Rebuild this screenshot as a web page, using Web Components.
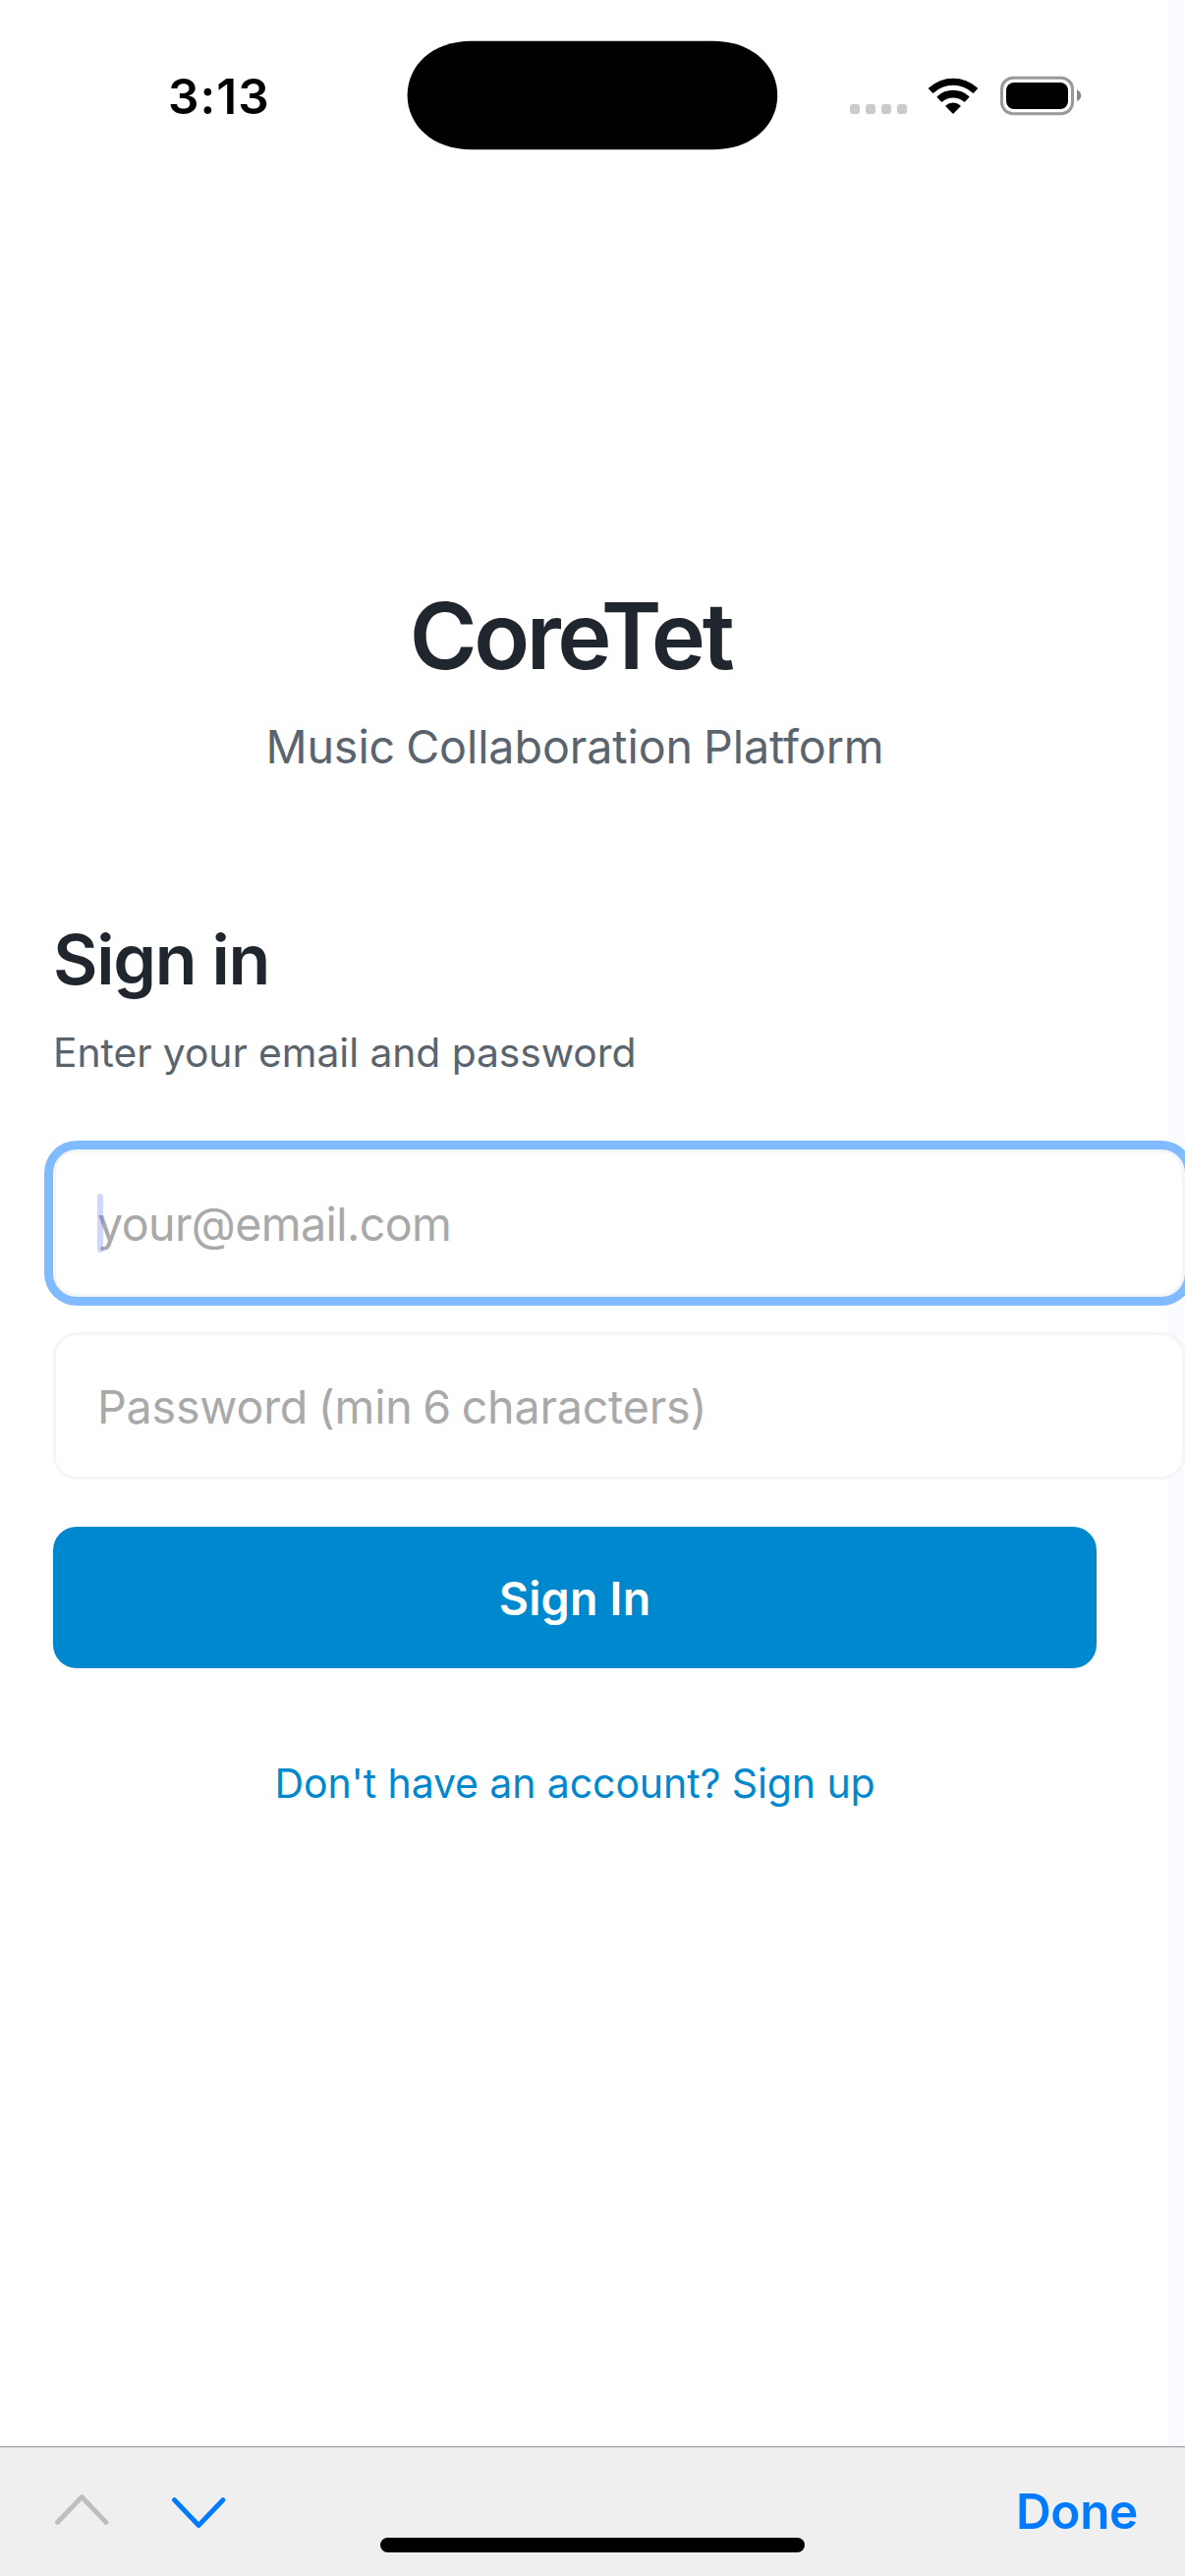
<!DOCTYPE html>
<html lang="en">
<head>
<meta charset="utf-8">
<title>CoreTet</title>
<style>
  html, body { margin: 0; padding: 0; }
  body { width: 1206px; height: 2622px; overflow: hidden; background: #fafbfe; font-family: Inter, "Liberation Sans", sans-serif; }
</style>
</head>
<body>
<phone-screen>
  <status-bar slot="status" time="3:13"></status-bar>
  <brand-header>CoreTet<span slot="tagline">Music Collaboration Platform</span></brand-header>
  <sign-in-form>
    <text-field focused style="--tracking:-0.61px">your@email.com</text-field>
    <text-field style="--tracking:-0.2px;--word-gap:-2.2px">Password (min 6 characters)</text-field>
    <primary-button>Sign In</primary-button>
    <link-button>Don't have an account? Sign up</link-button>
  </sign-in-form>
  <input-accessory slot="accessory">Done</input-accessory>
</phone-screen>

<script>
const define = (name, html) => {
  const template = document.createElement('template');
  template.innerHTML = html;
  customElements.define(name, class extends HTMLElement {
    connectedCallback() {
      if (this.shadowRoot) return;
      const root = this.attachShadow({ mode: 'open' });
      root.append(template.content.cloneNode(true));
      const time = root.querySelector('time');
      if (time) time.textContent = this.getAttribute('time');
    }
  });
};

define('phone-screen', `
  <style>
    :host { display: flex; flex-direction: column; width: 1206px; height: 2622px; overflow: hidden; }
    main { flex: 1; box-sizing: border-box; width: 1188px; background: #fff; display: flex; flex-direction: column; }
    .page { box-sizing: border-box; padding: 395px 72px 0 54px; }
  </style>
  <main>
    <slot name="status"></slot>
    <div class="page"><slot></slot></div>
  </main>
  <slot name="accessory"></slot>
`);

define('status-bar', `
  <style>
    :host { display: flex; align-items: flex-start; width: 1188px; height: 194px; }
    time { width: 243px; box-sizing: border-box; margin: 65.5px 0 0 171px; font-size: 49.5px; line-height: 64px; font-weight: 600; letter-spacing: 1.03px; color: #000; white-space: nowrap; }
    svg { display: block; flex: none; }
    .island { margin-top: 41px; }
    .signal { margin: 106px 0 0 73px; }
    .wifi { margin: 78px 0 0 21px; }
    .battery { margin: 77px 0 0 21px; }
  </style>
  <time></time>
  <svg class="island" width="378" height="112" viewBox="0 0 378 112"><path d="M66 .8H311.5C352 .8 377.200 26 377.200 56S352 111.2 311.5 111.2H66C25.500 111.2.6 86 .6 56S25.500 .8 66 .8Z"/></svg>
  <svg class="signal" width="58" height="10" viewBox="0 0 58 10" fill="#cacaca"><rect width="10" height="10" rx="3"/><rect x="16" width="10" height="10" rx="3"/><rect x="32" width="10" height="10" rx="3"/><rect x="48" width="10" height="10" rx="3"/></svg>
  <svg class="wifi" width="52" height="39" viewBox="944.500 78 52 39"><path d="M945.900 89.200A36.500 36.500 0 0 1 995.100 89.200Q995.900 89.900 995.300 90.600L991.500 94.500Q990.900 95 990.200 94.400A29 29 0 0 0 950.800 94.400Q950.100 95 949.500 94.500L945.700 90.600Q945.100 89.900 945.900 89.200Z"/><path d="M954.400 98.100A23.500 23.500 0 0 1 986.600 98.100Q987.200 98.700 986.700 99.300L982.600 103.400Q982 103.900 981.400 103.400A17 17 0 0 0 959.600 103.400Q959 103.900 958.400 103.400L954.300 99.300Q953.800 98.700 954.400 98.100Z"/><path d="M963.200 107.300A11 11 0 0 1 977.800 107.300Q978.300 107.900 977.900 108.400L971 115.500Q970.500 116 970 115.500L963.100 108.400Q962.700 107.900 963.200 107.300Z"/></svg>
  <svg class="battery" width="84" height="41" viewBox="1017 77 84 41"><rect x="1019.500" y="79.300" width="72" height="36.400" rx="11.500" fill="none" stroke="#999" stroke-width="3"/><rect x="1024" y="84" width="63" height="27" rx="8"/><path d="M1096 91.500C1098.700 92.600 1100.200 94.800 1100.200 97.300S1098.700 102 1096 103.100Z" fill="#868686"/></svg>
`);

define('brand-header', `
  <style>
    :host { display: flex; flex-direction: column; gap: 20px; text-align: center; white-space: nowrap; }
    h1 { margin: 0; padding-right: 9px; font-size: 93.5px; line-height: 116px; font-weight: 600; letter-spacing: -3.45px; color: #1f262d; }
    p { margin: 0; font-size: 46.6px; line-height: 70px; letter-spacing: -0.08px; word-spacing: -2px; color: #5a646e; }
  </style>
  <h1><slot></slot></h1>
  <p><slot name="tagline"></slot></p>
`);

define('sign-in-form', `
  <style>
    :host { display: flex; flex-direction: column; margin-top: 138px; }
    h2 { margin: 0; font-size: 70px; line-height: 87px; font-weight: 600; letter-spacing: -1.3px; color: #1f262d; }
    p { margin: 20px 0 67px; font-size: 40.8px; line-height: 63px; letter-spacing: -0.058px; color: #5a646e; }
  </style>
  <h2>Sign in</h2>
  <p>Enter your email and password</p>
  <slot></slot>
`);

define('text-field', `
  <style>
    :host { display: flex; align-items: center; position: relative; box-sizing: border-box; width: 1152px; height: 150px; margin-bottom: 36px; padding: 2px 42px 0; border: 3px solid #f4f5f7; border-radius: 24px; background: #fff; }
    :host([focused]) { box-shadow: 0 0 0 9px #80bbff; }
    :host(:not([focused])) { margin-bottom: 48px; }
    .hint { font-size: 46.6px; line-height: 58px; letter-spacing: var(--tracking); word-spacing: var(--word-gap, 0px); color: #a9a9a9; white-space: nowrap; }
    .caret { display: none; position: absolute; left: 42px; top: 42px; width: 6px; height: 60px; border-radius: 3px; background: rgba(60, 100, 255, .25); }
    :host([focused]) .caret { display: block; }
  </style>
  <span class="hint"><slot></slot></span><span class="caret"></span>
`);

define('primary-button', `
  <style>
    :host { display: flex; align-items: center; justify-content: center; box-sizing: border-box; height: 144px; padding-top: 2px; border-radius: 24px; background: #0088ce; color: #fff; font-size: 46.6px; line-height: 58px; font-weight: 600; letter-spacing: .202px; }
  </style>
  <slot></slot>
`);

define('link-button', `
  <style>
    :host { display: block; margin-top: 86px; text-align: center; font-size: 41px; line-height: 63px; letter-spacing: -0.1px; color: #0088ce; white-space: nowrap; }
  </style>
  <slot></slot>
`);

define('input-accessory', `
  <style>
    :host { display: flex; flex-direction: column; box-sizing: border-box; width: 1206px; height: 132px; border-top: 1px solid #929496; background: #efefef; }
    .row { display: flex; align-items: center; height: 92px; padding: 32px 48px 0 54px; box-sizing: border-box; }
    svg { display: block; margin-top: 6px; }
    .next { margin-left: 61px; }
    .done { margin-left: auto; padding-top: 6px; font-size: 49.5px; line-height: 60px; font-weight: 600; letter-spacing: -0.35px; color: #007aff; }
    .home { width: 432px; height: 15px; margin: 0 auto; border-radius: 8px; background: #000; }
  </style>
  <div class="row">
    <svg width="58" height="44" viewBox="54 2534 58 44" fill="none" stroke="#bebebe" stroke-width="4.800" stroke-linecap="round" stroke-linejoin="round"><path d="M58.400 2567.500L83.200 2541.500L108 2567.500"/></svg>
    <svg class="next" width="58" height="44" viewBox="173 2534 58 44" fill="none" stroke="#007aff" stroke-width="4.800" stroke-linecap="round" stroke-linejoin="round"><path d="M177.400 2544.500L202.200 2570.500L227 2544.500"/></svg>
    <span class="done"><slot></slot></span>
  </div>
  <div class="home"></div>
`);
</script>
</body>
</html>
